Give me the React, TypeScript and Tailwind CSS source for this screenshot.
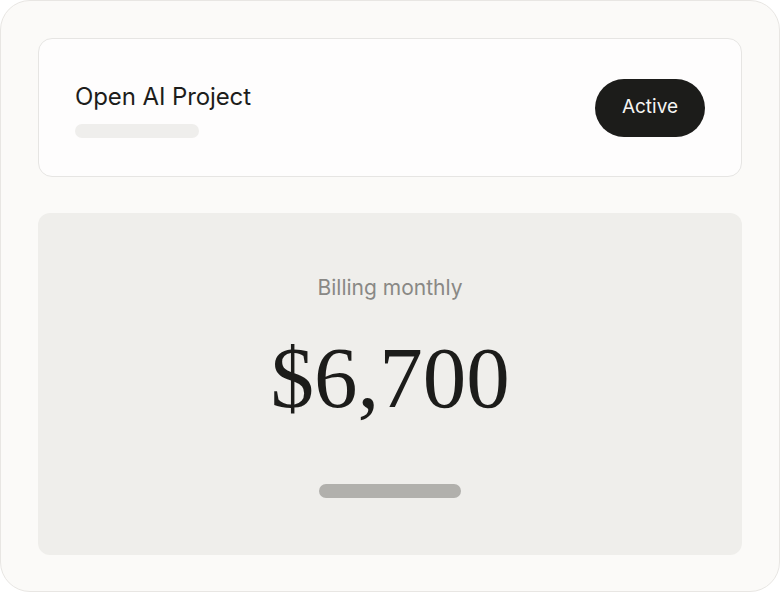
export default function App() {
  return (
    <div className="h-[593px] w-[780px] bg-white">
      <div className="flex h-[592px] w-[780px] flex-col gap-[36px] rounded-[30px] border border-[#e8e6e3] bg-[#fbfaf8] px-[37px] pb-[36px] pt-[37px]">
        <div className="flex h-[139px] items-center justify-between rounded-[14px] border border-[#e6e5e3] bg-[#fefdfd] pl-[36px] pr-[36px]">
          <div className="flex flex-col pt-[4px]">
            <h1 className="font-['Inter',sans-serif] text-[24px] leading-[30px] tracking-[-0.1px] text-[#1d1d1b]">
              Open AI Project
            </h1>
            <div className="mt-[12px] h-[14px] w-[124px] rounded-full bg-[#efeeec]" />
          </div>
          <div className="flex h-[58px] w-[110px] items-center justify-center rounded-full bg-[#1c1c1a] font-['Inter',sans-serif] text-[19px] text-[#f5f4f2]">
            Active
          </div>
        </div>

        <div className="flex flex-1 flex-col items-center rounded-[12px] bg-[#efeeeb] pt-[62px]">
          <p className="font-['Inter',sans-serif] text-[21px] leading-[26px] text-[#898885]">
            Billing monthly
          </p>
          <p className="mt-[27px] font-['Liberation_Serif',serif] text-[87px] leading-[100px] text-[#1c1c1a]">
            $6,700
          </p>
          <div className="mt-[56px] h-[14px] w-[142px] rounded-full bg-[#b1b0ac]" />
        </div>
      </div>
    </div>
  );
}
